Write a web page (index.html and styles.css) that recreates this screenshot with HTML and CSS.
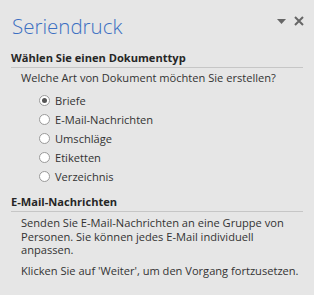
FILE: index.html
```html
<!DOCTYPE html>
<html lang="de">
<head>
    <meta charset="UTF-8">
    <title>Seriendruck</title>
    <link rel="stylesheet" href="styles.css">
</head>
<body>
    <div class="pane">
        <div class="pane-header">
            <h1>Seriendruck</h1>
            <div class="pane-tools">
                <svg class="tool-menu" width="9" height="5" viewBox="0 0 9 5"><path d="M0 0H9L4.5 5Z" fill="#666"/></svg>
                <svg class="tool-close" width="10" height="10" viewBox="0 0 10 10"><path d="M1 1L9 9M9 1L1 9" stroke="#666" stroke-width="2"/></svg>
            </div>
        </div>

        <div class="section">
            <h2>Wählen Sie einen Dokumenttyp</h2>
            <p class="question">Welche Art von Dokument möchten Sie erstellen?</p>
            <div class="options">
                <label class="option"><span class="radio checked"></span>Briefe</label>
                <label class="option"><span class="radio"></span>E-Mail-Nachrichten</label>
                <label class="option"><span class="radio"></span>Umschläge</label>
                <label class="option"><span class="radio"></span>Etiketten</label>
                <label class="option"><span class="radio"></span>Verzeichnis</label>
            </div>
        </div>

        <div class="section">
            <h2>E-Mail-Nachrichten</h2>
            <p class="desc">Senden Sie E-Mail-Nachrichten an eine Gruppe von Personen. Sie können jedes E-Mail individuell anpassen.</p>
            <p class="desc">Klicken Sie auf 'Weiter', um den Vorgang fortzusetzen.</p>
        </div>
    </div>
</body>
</html>
```

FILE: styles.css
```css
* {
    margin: 0;
    padding: 0;
    box-sizing: border-box;
}

body {
    font-family: 'Open Sans', 'Noto Sans', sans-serif;
    font-size: 11.1px;
    color: #333;
    background: #e6e6e6;
    width: 314px;
    height: 295px;
    overflow: hidden;
}

.pane {
    padding: 0 10px 0 11px;
}

.pane-header {
    display: flex;
    justify-content: space-between;
    align-items: center;
    height: 50px;
}

.pane-header h1 {
    font-weight: 300;
    font-size: 20.5px;
    line-height: 28px;
    color: #3b6fc2;
    padding-left: 1px;
    margin-top: 1px;
}

.pane-tools {
    display: flex;
    align-items: center;
    gap: 8px;
    align-self: flex-start;
    margin-top: 16px;
}

.tool-menu {
    margin-top: 1px;
}

.section h2 {
    font-size: 11.1px;
    font-weight: 700;
    line-height: 15px;
    color: #262626;
    padding-bottom: 2px;
    border-bottom: 1px solid #c6c6c6;
    margin-right: 1px;
}

.question {
    line-height: 15px;
    padding: 2px 0 0 10px;
}

.options {
    display: flex;
    flex-direction: column;
    padding: 6px 0 0 28px;
    margin-bottom: 8px;
}

.option {
    display: flex;
    align-items: center;
    height: 19px;
    gap: 5px;
}

.radio {
    width: 11px;
    height: 11px;
    border-radius: 50%;
    border: 1px solid #9a9a9a;
    background: #fff;
    display: flex;
    align-items: center;
    justify-content: center;
}

.radio.checked::after {
    content: "";
    width: 5px;
    height: 5px;
    border-radius: 50%;
    background: #555;
}

.desc {
    line-height: 13.5px;
    padding: 4px 0 0 10px;
}

.desc + .desc {
    padding-top: 7px;
}
```
